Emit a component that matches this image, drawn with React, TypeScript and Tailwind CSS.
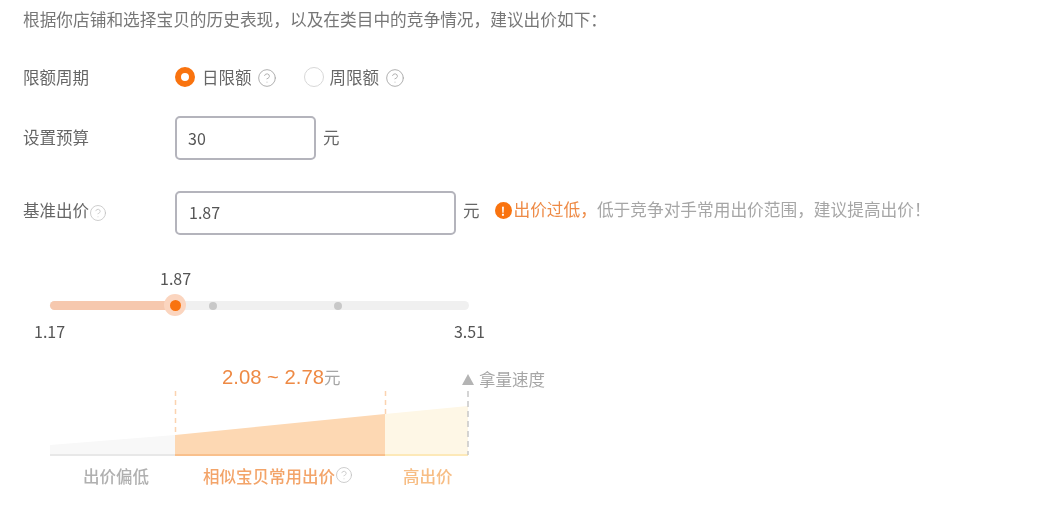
import React from 'react';
import { CircleHelp } from 'lucide-react';

const Help = ({ size = 20, className = 'text-[#a8a8a8]' }: { size?: number; className?: string }) => (
    <CircleHelp size={size} strokeWidth={1.1} className={`shrink-0 ${className}`} />
);

export default function App() {
    return (
        <div className="w-[1038px] h-[509px] overflow-hidden bg-white pl-[23px] pt-[7px] text-[16.5px] text-[#666] font-['Noto_Sans_CJK_SC','Noto_Sans',sans-serif] blur-[0.6px]">
            <div className="h-6 leading-6 text-[16.7px] text-[#777] whitespace-nowrap">根据你店铺和选择宝贝的历史表现，以及在类目中的竞争情况，建议出价如下：</div>

            <div className="mt-[34px] h-6 flex items-center">
                <div className="w-[152px]">限额周期</div>
                <div className="w-5 h-5 rounded-full border-[6px] border-[#f9730f]"></div>
                <span className="ml-[7px]">日限额</span>
                <Help className="ml-[5px] mt-[2px] text-[#a8a8a8]" />
                <div className="ml-[27px] w-5 h-5 rounded-full border border-[#d8d8d8]"></div>
                <span className="ml-[6px]">周限额</span>
                <Help className="ml-[6px] mt-[2px] text-[#a8a8a8]" />
            </div>

            <div className="mt-[27px] h-11 flex items-center">
                <div className="w-[152px] -mt-[2px]">设置预算</div>
                <div className="w-[141px] h-11 rounded-[5px] border-2 border-[#b4b4bc] pl-[11px] leading-[40px] text-[16px] text-[#555]">30</div>
                <span className="ml-[7px] -mt-[2px]">元</span>
            </div>

            <div className="mt-[31px] h-11 flex items-center">
                <div className="w-[66px] -mt-[6px]">基准出价</div>
                <Help size={18} className="text-[#c4c4c4]" />
                <div className="ml-[68px] w-[281px] h-11 rounded-[5px] border-2 border-[#b4b4bc] pl-[12px] leading-[38px] text-[16px] text-[#555]">1.87</div>
                <span className="ml-[7px] -mt-[6px]">元</span>
                <div className="ml-[15px] -mt-[6px] w-[17px] h-[17px] rounded-full bg-[#f9730f] text-white text-[12px] leading-[17px] text-center font-bold">!</div>
                <div className="ml-[2px] -mt-[6px] text-[16.7px] whitespace-nowrap">
                    <span className="text-[#ee8a45]">出价过低，</span>
                    <span className="text-[#a6a6a6]">低于竞争对手常用出价范围，建议提高出价！</span>
                </div>
            </div>

            <div className="mt-[33px] ml-[137px] h-5 leading-5 text-[16px] text-[#555]">1.87</div>
            <div className="relative mt-[13px] ml-[27px] w-[419px] h-[9px] rounded-full bg-[#f0f0f0]">
                <div className="w-[125px] h-[9px] rounded-l-full bg-[#f6c8ae]"></div>
                <div className="absolute left-[159px] top-[0.5px] w-2 h-2 rounded-full bg-[#c8c8c8]"></div>
                <div className="absolute left-[284px] top-[0.5px] w-2 h-2 rounded-full bg-[#c8c8c8]"></div>
                <div className="absolute left-[114px] top-[-7px] w-[22px] h-[22px] rounded-full bg-[#fbd5bf] flex items-center justify-center">
                    <div className="w-[11px] h-[11px] rounded-full bg-[#f9730f]"></div>
                </div>
            </div>
            <div className="mt-[11px] ml-[11px] w-[451px] h-5 leading-5 flex justify-between text-[16px] text-[#555]">
                <span>1.17</span>
                <span>3.51</span>
            </div>

            <div className="mt-[24px] h-6 flex">
                <div className="ml-[199px] w-[240px] leading-6 text-[#ee8a45] whitespace-nowrap">
                    <span className="text-[20.300px] font-['Liberation_Sans',sans-serif]">2.08 ~ 2.78</span>
                    <span className="text-[#a6a6a6]">元</span>
                </div>
                <div className="mt-[2px] flex items-center h-6 text-[#a6a6a6] whitespace-nowrap">
                    <svg width="12" height="11" viewBox="0 0 12 11" className="mr-[5px]">
                        <path d="M6 0 L12 11 L0 11 Z" fill="#b4b4b4" />
                    </svg>
                    拿量速度
                </div>
            </div>

            <svg width="420" height="65" viewBox="0 0 420 65" className="mt-[2px] ml-[27px] block">
                <path d="M0 54 L125 44 L125 63 L0 63 Z" fill="#f8f8f8" />
                <path d="M125 44 L335 23 L335 63 L125 63 Z" fill="#fdd8b3" />
                <path d="M335 23 L418 15 L418 63 L335 63 Z" fill="#fef7e6" />
                <rect x="0" y="63" width="125" height="2" fill="#e8e8e8" />
                <rect x="125" y="63" width="210" height="2" fill="#f9c08c" />
                <rect x="335" y="63" width="83" height="2" fill="#fde9b8" />
                <path d="M125.500 0 V44" stroke="#fbd3b0" strokeWidth="1.500" strokeDasharray="5 4" />
                <path d="M335.500 0 V23" stroke="#fbd3b0" strokeWidth="1.500" strokeDasharray="5 4" />
                <path d="M418 0 V64" stroke="#c8c8c8" strokeWidth="1.500" strokeDasharray="6 4" />
            </svg>

            <div className="mt-[10px] ml-[27px] h-5 leading-5 flex font-medium whitespace-nowrap">
                <div className="w-[125px] pl-[33px] text-[#b0b0b0]">出价偏低</div>
                <div className="w-[210px] pl-[28px] flex items-center text-[#f3a469]">
                    相似宝贝常用出价
                    <Help size={18} className="-mt-[2px] text-[#c4c4c4]" />
                </div>
                <div className="pl-[18px] text-[#f7bd84]">高出价</div>
            </div>
        </div>
    );
}
